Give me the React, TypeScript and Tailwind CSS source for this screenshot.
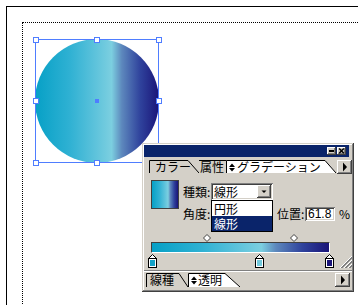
import React from "react";

// gradient used by the circle, the swatch and the slider bar
const GRAD =
  "bg-[linear-gradient(to_right,#06a0c6_0%,#2fb1d3_28%,#5cc2db_48%,#7ccfe0_61.8%,#5d88bd_70%,#2f429c_85%,#1a1478_100%)]";

const RAISED =
  "bg-[#d4d0c8] shadow-[inset_-1px_-1px_0_#404040,inset_1px_1px_0_#ffffff,inset_-2px_-2px_0_#808080]";
const SUNKEN =
  "bg-white shadow-[inset_1px_1px_0_#808080,inset_-1px_-1px_0_#ffffff,inset_2px_2px_0_#404040,inset_-2px_-2px_0_#d4d0c8]";

const stops = [
  { pos: 0, color: "#12a2c8" },
  { pos: 0.61, color: "#72c9dc" },
  { pos: 1, color: "#1a1478" },
];
const mids = [0.31, 0.8];
// stop centres run from x=8 to x=185 inside the panel body
const track = (p: number) => 8 + p * 177;

function UpDown() {
  return (
    <svg width="6" height="9" className="shrink-0">
      <polygon points="0,4 3,0.5 6,4" fill="black" />
      <polygon points="0,5 6,5 3,8.5" fill="black" />
    </svg>
  );
}

function ArrowBtn({ className }: { className: string }) {
  return (
    <div className={`${RAISED} ${className} w-[15px] h-[14px]`}>
      <svg width="15" height="14">
        <polygon points="6,2.5 10,7 6,11.5" fill="black" />
      </svg>
    </div>
  );
}

function Handle({ x, y }: { x: number; y: number }) {
  return (
    <div
      className="absolute w-[6px] h-[6px] bg-white border border-[#4f7dff]"
      style={{ left: x - 3, top: y - 3 }}
    />
  );
}

export default function App() {
  return (
    <div className="relative w-[358px] h-[305px] overflow-hidden bg-white font-['Noto_Sans_CJK_JP',sans-serif] text-black">
      {/* artboard + printable area */}
      <div className="absolute left-[6px] top-[6px] w-[500px] h-[500px] border-l border-t border-black" />
      <div className="absolute left-[22px] top-[22px] w-[500px] h-[500px] border-l border-t border-dotted border-black" />

      {/* selected circle */}
      <div className="absolute left-[35px] top-[39px] w-[124px] h-[124px]">
        <div className={`absolute inset-0 rounded-full ${GRAD}`} />
        <div className="absolute inset-0 border border-[#4f7dff]" />
        {[
          [0, 0], [61.5, 0], [123, 0],
          [0, 61.5], [123, 61.5],
          [0, 123], [61.5, 123], [123, 123],
        ].map(([x, y], i) => (
          <Handle key={i} x={x + 0.5} y={y + 0.5} />
        ))}
        <div className="absolute left-[60px] top-[60px] w-[4px] h-[4px] bg-[#4f7dff]" />
      </div>

      {/* gradient palette */}
      <div className="absolute left-[142px] top-[143px] w-[212px] h-[149px] p-[2px] flex flex-col bg-[#d4d0c8] shadow-[inset_-1px_-1px_0_#404040,inset_1px_1px_0_#d4d0c8,inset_-2px_-2px_0_#808080,inset_2px_2px_0_#ffffff] text-[12px] leading-[12px]">
        <div className="h-[12px] mr-[3px] bg-[#0a246a] flex items-center justify-end gap-[1px] pr-[3px]">
          <div className={`${RAISED} w-[9px] h-[8px]`}>
            <svg width="9" height="8">
              <rect x="2" y="3" width="5" height="2" fill="black" />
            </svg>
          </div>
          <div className={`${RAISED} w-[9px] h-[8px]`}>
            <svg width="9" height="8">
              <path d="M2.2,1.5 L6.8,6.2 M6.8,1.5 L2.2,6.2" stroke="black" strokeWidth="1.5" />
            </svg>
          </div>
        </div>

        {/* tabs */}
        <div className="mt-[3px] h-[13px] flex">
          <div className="ml-[5px] relative w-[50px] h-[13px]">
            <svg width="50" height="13" className="absolute inset-0">
              <path d="M0.5,13 V0.5 H39 L50,13" fill="none" stroke="black" />
            </svg>
            <span className="absolute left-[6px] top-[1px]">カラー</span>
          </div>
          <div className="relative w-[27px] h-[13px] border-t border-black">
            <span className="absolute left-[1px] top-0">属性</span>
          </div>
          <div className="relative w-[110px] h-[13px]">
            <svg width="110" height="13" className="absolute inset-0">
              <path d="M0.5,13 V0.5 H99 L110,13 Z" fill="white" stroke="none" />
              <path d="M0.5,13 V0.5 H99 L110,13" fill="none" stroke="black" />
            </svg>
            <div className="absolute left-[3px] top-[1px] flex items-center gap-[2px]">
              <UpDown />
              <span>グラデーション</span>
            </div>
          </div>
          <ArrowBtn className="ml-auto h-[13px] flex items-center justify-center" />
        </div>

        {/* type / angle / position */}
        <div className="mt-[7px] pl-[7px] flex">
          <div className={`w-[28px] h-[29px] border border-[#404040] ${GRAD}`} />
          <div className="ml-[4px] flex flex-col">
            <div className="mt-[3px] h-[17px] flex items-center">
              <span className="w-[28px]">種類:</span>
              <div className={`relative w-[62px] h-[17px] ${SUNKEN} flex items-center`}>
                <span className="pl-[3px]">線形</span>
                <div className={`absolute right-[2px] top-[2px] w-[14px] h-[13px] ${RAISED}`}>
                  <svg width="14" height="13">
                    <polygon points="4.5,5.5 9.5,5.5 7,8" fill="black" />
                  </svg>
                </div>
                <div className="absolute left-0 top-[17px] z-10 w-[62px] flex flex-col border border-black bg-white">
                  <div className="h-[15px] pl-[2px] flex items-center">円形</div>
                  <div className="h-[15px] pl-[2px] flex items-center bg-[#0a246a] text-white">線形</div>
                </div>
              </div>
            </div>
            <div className="mt-[7px] h-[14px] flex items-center">
              <span className="w-[28px]">角度:</span>
              <div className="w-[62px]" />
              <span className="ml-[4px] w-[28px]">位置:</span>
              <div className={`w-[30px] h-[14px] ${SUNKEN} flex items-center pl-[3px] font-['Liberation_Sans',sans-serif]`}>
                61.8
              </div>
              <span className="ml-[4px]">%</span>
            </div>
          </div>
        </div>

        {/* gradient slider */}
        <div className="mt-[13px] flex flex-col">
          <div className="relative h-[7px]">
            {mids.map((m) => (
              <svg key={m} width="8" height="8" className="absolute top-0" style={{ left: track(m) - 4 }}>
                <polygon points="4,0.5 7.5,4 4,7.5 0.5,4" fill="white" stroke="#404040" />
              </svg>
            ))}
          </div>
          <div className={`mt-[1px] ml-[7px] w-[179px] h-[11px] border-t border-l border-[#404040] border-b border-r border-b-white border-r-white ${GRAD}`} />
          <div className="relative h-[15px]">
            {stops.map((s) => (
              <svg key={s.pos} width="9" height="14" className="absolute top-[1px]" style={{ left: track(s.pos) - 4.5 }}>
                <polygon points="4.5,0.5 8.5,4.5 0.5,4.5" fill="white" stroke="black" />
                <rect x="0.5" y="4.5" width="8" height="9" fill="white" stroke="black" />
                <rect x="2" y="6" width="5" height="6" fill={s.color} />
              </svg>
            ))}
            <svg width="12" height="12" className="absolute right-0 bottom-0">
              {[0, 4, 8].map((k) => (
                <g key={k}>
                  <line x1={k} y1="12" x2="12" y2={k} stroke="white" />
                  <line x1={k + 1} y1="12" x2="12" y2={k + 1} stroke="#808080" />
                  <line x1={k + 2} y1="12" x2="12" y2={k + 2} stroke="#808080" />
                </g>
              ))}
            </svg>
          </div>
        </div>

        <div className="mt-[2px] border-t border-b border-t-[#808080] border-b-white" />

        {/* bottom tabs */}
        <div className="mt-[1px] h-[14px] flex">
          <div className="ml-[2px] relative w-[42px] h-[14px]">
            <svg width="42" height="14" className="absolute inset-0">
              <path d="M0.5,14 V0.5 H33 L42,14" fill="none" stroke="black" />
            </svg>
            <span className="absolute left-[4px] top-[1px]">線種</span>
          </div>
          <div className="relative w-[52px] h-[14px]">
            <svg width="52" height="14" className="absolute inset-0">
              <path d="M0.5,14 V0.5 H37 L52,14 Z" fill="white" stroke="none" />
              <path d="M0.5,14 V0.5 H37 L52,14" fill="none" stroke="black" />
            </svg>
            <div className="absolute left-[3px] top-[1px] flex items-center gap-[1px]">
              <UpDown />
              <span>透明</span>
            </div>
          </div>
          <ArrowBtn className="ml-auto mr-[2px] flex items-center justify-center" />
        </div>
      </div>
    </div>
  );
}
